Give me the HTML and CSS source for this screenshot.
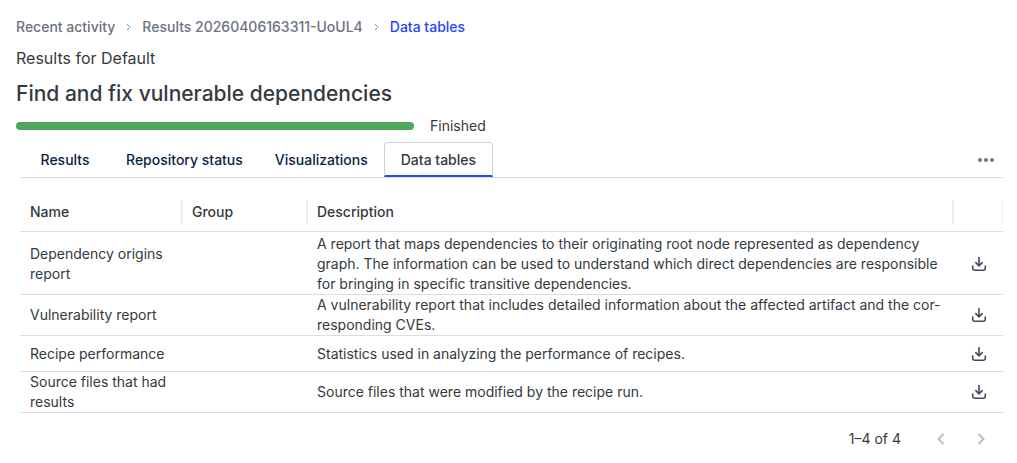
FILE: index.html
```
<!DOCTYPE html>
<html lang="en">
<head>
  <meta charset="UTF-8">
  <meta name="viewport" content="width=device-width, initial-scale=1.0">
  <title>Data tables</title>
  <link rel="stylesheet" href="styles.css">
</head>
<body>
  <svg class="sprite" aria-hidden="true">
    <symbol id="download" viewBox="0 0 16 16">
      <path d="M8 1.5v8M4.8 6.6 8 9.8l3.2-3.2M1.7 10v2.6q0 1.6 1.6 1.6h9.4q1.6 0 1.6-1.6V10"/>
    </symbol>
  </svg>

  <header>
    <nav class="breadcrumbs" aria-label="Breadcrumb">
      <a href="#">Recent activity</a>
      <svg viewBox="0 0 6 8"><path d="M1.5 1 4.5 4l-3 3"/></svg>
      <a href="#">Results 20260406163311-UoUL4</a>
      <svg viewBox="0 0 6 8"><path d="M1.5 1 4.5 4l-3 3"/></svg>
      <a href="#" class="current">Data tables</a>
    </nav>
    <p class="subtitle">Results for Default</p>
    <h1>Find and fix vulnerable dependencies</h1>
    <div class="status">
      <div class="progress"></div>
      <span>Finished</span>
    </div>
  </header>

  <main>
    <div class="tabs">
      <button class="tab">Results</button>
      <button class="tab">Repository status</button>
      <button class="tab">Visualizations</button>
      <button class="tab active">Data tables</button>
      <button class="more" aria-label="More">
        <svg viewBox="0 0 16 4"><circle cx="2" cy="2" r="2"/><circle cx="8" cy="2" r="2"/><circle cx="14" cy="2" r="2"/></svg>
      </button>
    </div>

    <table>
      <thead>
        <tr>
          <th class="name">Name</th>
          <th class="group">Group</th>
          <th>Description</th>
          <th class="action"></th>
        </tr>
      </thead>
      <tbody>
        <tr>
          <td>Dependency origins report</td>
          <td></td>
          <td>A report that maps dependencies to their originating root node represented as dependency graph. The information can be used to understand which direct dependencies are responsible for bringing in specific transitive dependencies.</td>
          <td class="action"><button aria-label="Download"><svg><use href="#download"/></svg></button></td>
        </tr>
        <tr>
          <td>Vulnerability report</td>
          <td></td>
          <td>A vulnerability report that includes detailed information about the affected artifact and the cor&shy;responding CVEs.</td>
          <td class="action"><button aria-label="Download"><svg><use href="#download"/></svg></button></td>
        </tr>
        <tr>
          <td>Recipe performance</td>
          <td></td>
          <td>Statistics used in analyzing the performance of recipes.</td>
          <td class="action"><button aria-label="Download"><svg><use href="#download"/></svg></button></td>
        </tr>
        <tr>
          <td>Source files that had results</td>
          <td></td>
          <td>Source files that were modified by the recipe run.</td>
          <td class="action"><button aria-label="Download"><svg><use href="#download"/></svg></button></td>
        </tr>
      </tbody>
    </table>

    <div class="pagination">
      <span>1–4 of 4</span>
      <button disabled aria-label="Previous page"><svg viewBox="0 0 8 12"><path d="M6.5 1 1.5 6l5 5"/></svg></button>
      <button disabled aria-label="Next page"><svg viewBox="0 0 8 12"><path d="m1.5 1 5 5-5 5"/></svg></button>
    </div>
  </main>
</body>
</html>
```
FILE: styles.css
```
* { box-sizing: border-box; }
body { font-family: Inter, sans-serif; font-size: 14px; line-height: 20px; color: #343a40; background: #fff; margin: 0; padding: 16px 6px 0 16px; }
button { font: inherit; background: none; border: none; padding: 0; cursor: pointer; }
svg { display: block; fill: none; stroke: currentColor; }
.sprite { display: none; }

.breadcrumbs { display: flex; align-items: center; font-weight: 500; height: 22px; color: #8b919c; }
.breadcrumbs a { color: #6b7280; text-decoration: none; }
.breadcrumbs a.current { color: #2546fb; }
.breadcrumbs svg { width: 7px; height: 8px; margin: 0 10px; }
.subtitle { font-size: 16px; line-height: 24px; margin: 8px 0; }
h1 { font-size: 21px; line-height: 32px; font-weight: 500; margin: 0; }
.status { display: flex; align-items: center; gap: 16px; margin-top: 6px; }
.progress { width: 40%; height: 8px; border-radius: 4px; background: #50a65c; }

main { margin: 0 8px 0 4px; }
.tabs { display: flex; margin-top: 6px; border-bottom: 1px solid #dcdde0; }
.tab { height: 35px; min-width: 90px; padding: 3px 16px 2px; font-weight: 500; color: #0b1f41; }
.tab.active { padding: 2px 16px 0; color: #343a40; border: 1px solid #d0d3dd; border-bottom: 2px solid #2546fb; border-radius: 4px 4px 0 0; }
.more { margin-left: auto; padding: 0 9px; color: #757575; }
.more svg { width: 16px; fill: currentColor; stroke: none; }

table { width: 100%; table-layout: fixed; border-collapse: separate; border-spacing: 0; margin-top: 14px; }
th, td { padding: 0 10px; text-align: left; border-bottom: 1px solid #dcdde0; }
th { height: 40px; font-weight: 500; background: linear-gradient(#ededed, #ededed) right center / 1px 24px no-repeat, linear-gradient(#ededed, #ededed) left center / 1px 24px no-repeat; }
th.name { width: 162px; background-size: 1px 24px, 0 0; }
th.group { width: 125px; }
th.action { width: 50px; }
td { height: 36px; }
tbody tr:first-child td { padding-top: 2px; }
.action button { display: block; margin: 0 auto; color: #414b5a; }
td.action { padding: 0 8px 0 10px; }
.action svg { width: 16px; height: 16px; stroke-width: 1.6; stroke-linecap: round; }

.pagination { display: flex; justify-content: flex-end; align-items: center; height: 52px; padding-right: 2px; }
.pagination span { margin-right: 20px; }
.pagination button { width: 40px; height: 40px; color: #bdbdbd; }
.pagination svg { width: 8px; height: 12px; margin: 0 auto; stroke-width: 2; }
```
